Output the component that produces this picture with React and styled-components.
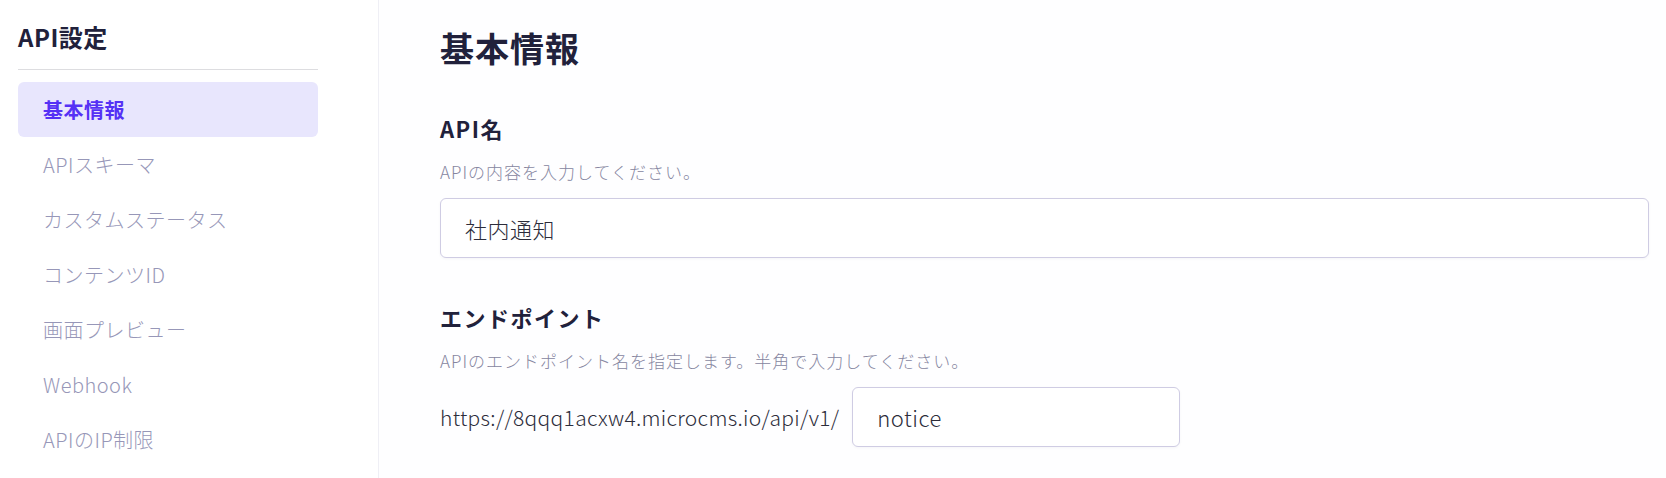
import styled, { createGlobalStyle } from 'styled-components';

const GlobalStyle = createGlobalStyle`
	* {
		box-sizing: border-box;
	}
	body {
		margin: 0;
		font-family: 'Noto Sans CJK JP', 'Noto Sans', sans-serif;
		background: #fefeff;
		color: #21213b;
	}
`;

const menu = [
	'基本情報',
	'APIスキーマ',
	'カスタムステータス',
	'コンテンツID',
	'画面プレビュー',
	'Webhook',
	'APIのIP制限',
];

function App() {
	return (
		<>
			<GlobalStyle />
			<Layout>
				<Sidebar>
					<SideTitle>API設定</SideTitle>
					<Nav>
						{menu.map((label, i) => (
							<NavItem key={label} $active={i === 0}>
								{label}
							</NavItem>
						))}
					</Nav>
				</Sidebar>
				<Main>
					<PageTitle>基本情報</PageTitle>
					<Field $gap={40}>
						<Label>API名</Label>
						<Desc>APIの内容を入力してください。</Desc>
						<TextInput readOnly value="社内通知" />
					</Field>
					<Field $gap={43}>
						<Label>エンドポイント</Label>
						<Desc>APIのエンドポイント名を指定します。半角で入力してください。</Desc>
						<EndpointRow>
							<BaseUrl>https://8qqq1acxw4.microcms.io/api/v1/</BaseUrl>
							<TextInput readOnly value="notice" $width={328} />
						</EndpointRow>
					</Field>
				</Main>
			</Layout>
		</>
	);
}

const Layout = styled.div`
	display: flex;
	height: 478px;
`;

const Sidebar = styled.aside`
	width: 379px;
	flex-shrink: 0;
	background: #ffffff;
	border-right: 1px solid #efeff5;
	padding: 0 60px 0 18px;
`;

const SideTitle = styled.h2`
	margin: 0;
	padding: 19px 0 14px;
	font-size: 24px;
	line-height: 36px;
	font-weight: 700;
	letter-spacing: 0.5px;
	color: #21213b;
	border-bottom: 1px solid #dddde0;
`;

const Nav = styled.nav`
	display: flex;
	flex-direction: column;
	margin-top: 12px;
`;

const NavItem = styled.div`
	height: 55px;
	display: flex;
	align-items: center;
	padding-left: 25px;
	border-radius: 6px;
	font-size: 20px;
	letter-spacing: 0.5px;
	font-weight: ${({ $active }) => ($active ? 700 : 300)};
	color: ${({ $active }) => ($active ? '#5531f5' : '#9797b8')};
	background: ${({ $active }) => ($active ? '#e8e6fd' : 'transparent')};
`;

const Main = styled.main`
	flex: 1;
	padding: 0 17px 0 61px;
`;

const PageTitle = styled.h1`
	margin: 24px 0 0;
	font-size: 34px;
	line-height: 48px;
	font-weight: 700;
	letter-spacing: 1px;
	color: #21213b;
`;

const Field = styled.section`
	margin-top: ${({ $gap }) => $gap}px;
`;

const Label = styled.h3`
	margin: 0;
	font-size: 22px;
	line-height: 32px;
	font-weight: 700;
	letter-spacing: 1.5px;
	color: #21213b;
`;

const Desc = styled.p`
	margin: 16px 0 14px;
	font-size: 17px;
	line-height: 24px;
	font-weight: 300;
	letter-spacing: 1px;
	color: #86869f;
`;

const TextInput = styled.input`
	display: block;
	width: ${({ $width }) => ($width ? `${$width}px` : '100%')};
	height: 60px;
	padding: 0 24px;
	border: 1px solid #cfcce3;
	border-radius: 6px;
	background: #ffffff;
	box-shadow: 0 1px 3px rgba(30, 30, 80, 0.04);
	font-family: inherit;
	font-size: 22px;
	font-weight: 300;
	letter-spacing: 0.5px;
	color: #2c2c3a;
	outline: none;
`;

const EndpointRow = styled.div`
	display: flex;
	align-items: center;
	gap: 13px;
`;

const BaseUrl = styled.span`
	font-size: 21px;
	font-weight: 300;
	letter-spacing: 0.3px;
	color: #2c2c3a;
	white-space: nowrap;
`;

export default App;
